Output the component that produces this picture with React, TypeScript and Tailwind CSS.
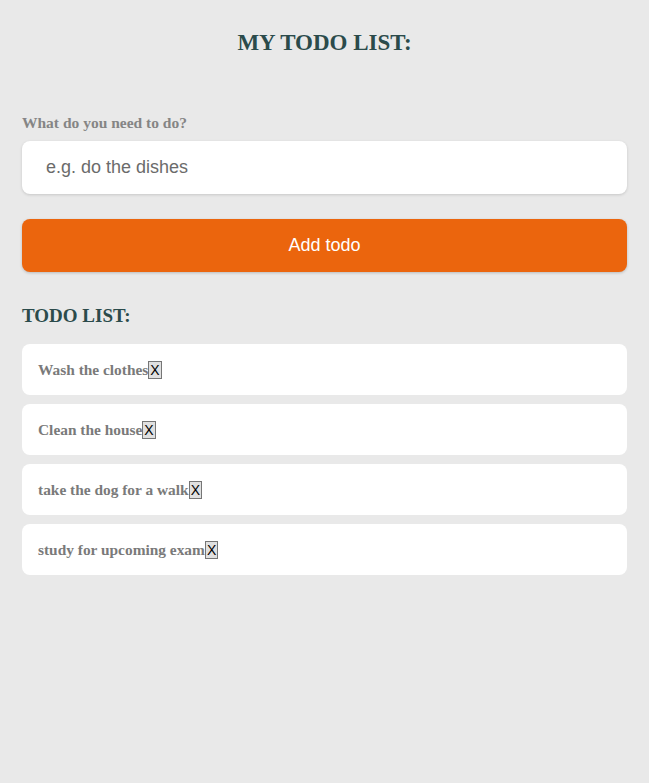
import { useState } from "react"

const serif = "font-['Liberation_Serif',serif]"

export default function App() {
  const [todos, setTodos] = useState([
    "Wash the clothes",
    "Clean the house",
    "take the dog for a walk",
    "study for upcoming exam",
  ])
  const [text, setText] = useState("")

  const add = () => {
    if (!text.trim()) return
    setTodos([...todos, text])
    setText("")
  }

  return (
    <div className="min-h-[783px] bg-[#e9e9e9] px-[22px] pt-[28px]">
      <h1 className={`${serif} text-center text-[23px] font-bold text-[#2b4b4b] leading-[30px]`}>
        MY TODO LIST:
      </h1>

      <label className={`${serif} mt-[55px] block text-[15.5px] font-bold text-[#858585] leading-[20px]`}>
        What do you need to do?
      </label>
      <input
        value={text}
        onChange={(e) => setText(e.target.value)}
        placeholder="e.g. do the dishes"
        className="mt-[8px] block h-[53px] w-full rounded-[8px] bg-white px-[24px] font-['Liberation_Sans',sans-serif] text-[18px] text-[#555] shadow-[0_1px_3px_rgba(0,0,0,0.15)] outline-none placeholder:text-[#6b6b6b]"
      />

      <button
        onClick={add}
        className="mt-[25px] block h-[53px] w-full rounded-[8px] bg-[#eb650d] font-['Liberation_Sans',sans-serif] text-[18px] text-white shadow-[0_1px_3px_rgba(0,0,0,0.2)]"
      >
        Add todo
      </button>

      <h2 className={`${serif} mt-[32px] text-[19px] font-bold text-[#2b4b4b] leading-[24px]`}>
        TODO LIST:
      </h2>

      <ul className="mt-[16px] flex flex-col gap-[9px]">
        {todos.map((t, i) => (
          <li
            key={i}
            className={`${serif} flex h-[51px] items-center rounded-[8px] bg-white px-[16px] text-[15.4px] font-bold text-[#7a7a7a]`}
          >
            {t}
            <button
              onClick={() => setTodos(todos.filter((_, j) => j !== i))}
              className="border border-[#767676] bg-[#e0e0e0] px-[1px] font-['Liberation_Sans',sans-serif] text-[14px] font-normal leading-[16px] text-black"
            >
              X
            </button>
          </li>
        ))}
      </ul>
    </div>
  )
}
